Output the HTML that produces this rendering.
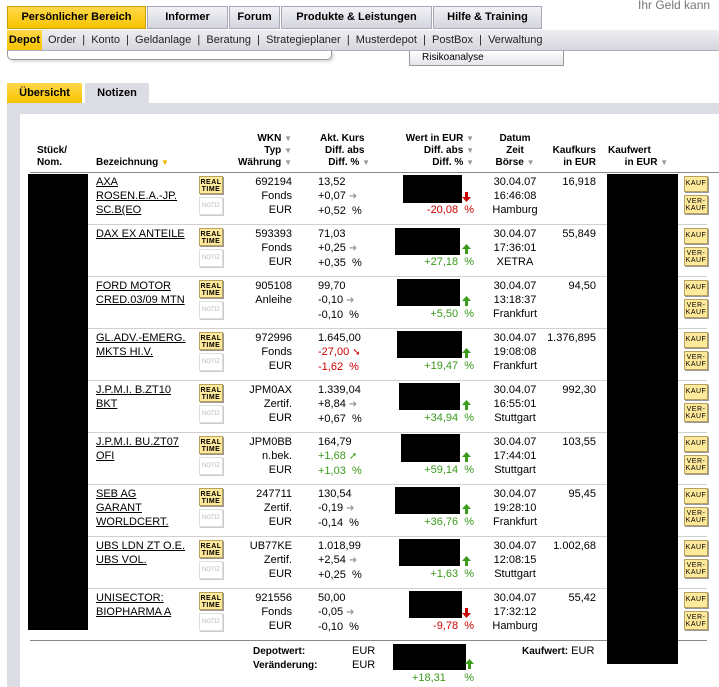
<!DOCTYPE html>
<html><head><meta charset="utf-8"><style>
*{margin:0;padding:0;box-sizing:border-box}
body{width:719px;height:687px;overflow:hidden;background:#fff;font-family:"Liberation Sans","DejaVu Sans",sans-serif;font-size:11px;color:#000;position:relative}
.a{position:absolute;white-space:nowrap}
.tab{position:absolute;top:6px;height:23px;border:1px solid #a8a8b8;background:linear-gradient(#f2f2f6,#d4d4de);font-weight:bold;font-size:11px;text-align:center;line-height:21px}
.y{background:linear-gradient(#ffd84a,#f7c400)!important;border-color:#c8a000!important}
.sub{position:absolute;top:30px;left:7px;width:712px;height:21px;background:linear-gradient(#eeeef2,#d6d6de);border-bottom:1px solid #b0b0bc;font-size:11px;line-height:20px;color:#222}
.h{font-weight:bold;font-size:10px;line-height:12px}
.ar{color:#999;font-size:8px}
.rt{position:absolute;width:24px;height:18px;background:#ffe99a;border:1px solid #b8a060;box-shadow:1px 1px 0 #999;font-size:7px;font-weight:bold;line-height:7px;text-align:center;padding-top:2px;letter-spacing:.5px}
.nt{position:absolute;width:24px;height:18px;background:#fff;border:1px solid #ddd;box-shadow:1px 1px 0 #ccc;font-size:6px;color:#bbb;line-height:16px;text-align:center}
.kb{position:absolute;left:684px;width:24px;background:#ffe99a;border:1px solid #b8a060;box-shadow:1px 1px 0 #999;font-size:7px;text-align:center;line-height:7px;letter-spacing:.5px}
.l{line-height:14px}
.nm{left:96px;text-decoration:underline}
.wk{width:80px;text-align:right;left:212px}
.ku{left:318px}
.dt{width:50px;left:490px;text-align:center}
.kk{width:60px;left:536px;text-align:right}
.b{position:absolute;background:#000}
.sep{position:absolute;left:88px;width:619px;height:1px;background:#d0d0d0}
.red{color:#c00}.grn{color:#3a9a1a}
svg.u,svg.d{position:absolute;width:9px;height:10px}
</style></head><body>
<div class="a" style="left:638px;top:-2px;color:#777;font-size:12px">Ihr Geld kann</div>
<div class="tab y" style="left:7px;width:139px">Persönlicher Bereich</div>
<div class="tab" style="left:147px;width:81px">Informer</div>
<div class="tab" style="left:229px;width:51px">Forum</div>
<div class="tab" style="left:281px;width:151px">Produkte &amp; Leistungen</div>
<div class="tab" style="left:433px;width:109px">Hilfe &amp; Training</div>
<div class="sub"><span class="y" style="display:inline-block;width:35px;font-weight:bold;text-align:center;color:#000">Depot</span><span style="padding-left:6px">Order&nbsp;&nbsp;|&nbsp;&nbsp;Konto&nbsp;&nbsp;|&nbsp;&nbsp;Geldanlage&nbsp;&nbsp;|&nbsp;&nbsp;Beratung&nbsp;&nbsp;|&nbsp;&nbsp;Strategieplaner&nbsp;&nbsp;|&nbsp;&nbsp;Musterdepot&nbsp;&nbsp;|&nbsp;&nbsp;PostBox&nbsp;&nbsp;|&nbsp;&nbsp;Verwaltung</span></div>
<div class="a" style="left:7px;top:50px;width:325px;height:10px;border:1px solid #999;border-top:none;border-radius:0 0 5px 5px;box-shadow:2px 2px 2px #ddd"></div>
<div class="a" style="left:409px;top:51px;width:155px;height:15px;border:1px solid #999;border-top:none;background:linear-gradient(#fff,#e4e4ea);font-size:10px;padding-left:12px;line-height:13px">Risikoanalyse</div>
<div class="a y" style="left:7px;top:83px;width:75px;height:20px;font-weight:bold;text-align:center;line-height:20px">Übersicht</div>
<div class="a" style="left:85px;top:83px;width:64px;height:20px;background:#dcdce4;font-weight:bold;text-align:center;line-height:20px">Notizen</div>
<div class="a" style="left:7px;top:103px;width:712px;height:584px;background:#dcdce4"></div>
<div class="a" style="left:20px;top:114px;width:699px;height:573px;background:#fff"></div>
<div class="a h" style="left:37px;top:145px">Stück/<br>Nom.</div>
<div class="a h" style="left:96px;top:157px">Bezeichnung <span style="color:#f0b400;font-size:8px">▼</span></div>
<div class="a h" style="left:200px;width:92px;text-align:right;top:133px">WKN <span class="ar">▼</span><br>Typ <span class="ar">▼</span><br>Währung <span class="ar">▼</span></div>
<div class="a h" style="left:300px;width:70px;text-align:right;top:133px">Akt. Kurs&nbsp;&nbsp;<br>Diff. abs&nbsp;&nbsp;<br>Diff. % <span class="ar">▼</span></div>
<div class="a h" style="left:390px;width:84px;text-align:right;top:133px">Wert in EUR <span class="ar">▼</span><br>Diff. abs <span class="ar">▼</span><br>Diff. % <span class="ar">▼</span></div>
<div class="a h" style="left:488px;width:54px;text-align:center;top:133px">Datum<br>Zeit<br>Börse <span class="ar">▼</span></div>
<div class="a h" style="left:540px;width:56px;text-align:right;top:145px">Kaufkurs<br>in EUR</div>
<div class="a h" style="left:608px;top:145px">Kaufwert<br>&nbsp;&nbsp;&nbsp;&nbsp;&nbsp;&nbsp;in EUR <span class="ar">▼</span></div>
<div class="a" style="left:30px;top:172px;width:689px;height:1px;background:#888"></div>

<div class="sep" style="top:224px"></div><div class="sep" style="top:276px"></div><div class="sep" style="top:328px"></div><div class="sep" style="top:380px"></div><div class="sep" style="top:432px"></div><div class="sep" style="top:484px"></div><div class="sep" style="top:536px"></div><div class="sep" style="top:588px"></div>
<div class="a" style="left:30px;top:640px;width:677px;height:1px;background:#888"></div>
<div class="b" style="left:28px;top:174px;width:60px;height:456px"></div>
<div class="b" style="left:607px;top:174px;width:71px;height:490px"></div>

<!-- R1 -->
<div class="a l nm" style="top:175px">AXA<br>ROSEN.E.A.-JP.<br>SC.B(EO</div>
<div class="rt" style="left:199px;top:176px">REAL<br>TIME</div><div class="nt" style="left:199px;top:197px">NOTIZ</div>
<div class="a l wk" style="top:175px">692194<br>Fonds<br>EUR</div>
<div class="a l ku" style="top:175px">13,52<br>+0,07 <span class="ar" style="font-size:10px">➜</span><br>+0,52&nbsp; %</div>
<div class="b" style="left:403px;top:175px;width:59px;height:28px"></div>
<svg class="d" style="left:462px;top:192px" viewBox="0 0 9 10"><path d="M3 0h3v5h3L4.5 10 0 5h3z" fill="#c00"/></svg>
<div class="a l red" style="left:400px;width:74px;text-align:right;top:203px">-20,08&nbsp; %</div>
<div class="a l dt" style="top:175px">30.04.07<br>16:46:08<br>Hamburg</div>
<div class="a l kk" style="top:175px">16,918</div>
<div class="kb" style="top:176px;height:16px;line-height:14px">KAUF</div><div class="kb" style="top:195px;height:19px;padding-top:2px">VER-<br>KAUF</div>
<!-- R2 -->
<div class="a l nm" style="top:227px">DAX EX ANTEILE</div>
<div class="rt" style="left:199px;top:228px">REAL<br>TIME</div><div class="nt" style="left:199px;top:249px">NOTIZ</div>
<div class="a l wk" style="top:227px">593393<br>Fonds<br>EUR</div>
<div class="a l ku" style="top:227px">71,03<br>+0,25 <span class="ar" style="font-size:10px">➜</span><br>+0,35&nbsp; %</div>
<div class="b" style="left:395px;top:228px;width:65px;height:27px"></div>
<svg class="u" style="left:462px;top:244px" viewBox="0 0 9 10"><path d="M3 10h3V5h3L4.5 0 0 5h3z" fill="#3a9a1a"/></svg>
<div class="a l grn" style="left:400px;width:74px;text-align:right;top:255px">+27,18&nbsp; %</div>
<div class="a l dt" style="top:227px">30.04.07<br>17:36:01<br>XETRA</div>
<div class="a l kk" style="top:227px">55,849</div>
<div class="kb" style="top:228px;height:16px;line-height:14px">KAUF</div><div class="kb" style="top:247px;height:19px;padding-top:2px">VER-<br>KAUF</div>
<!-- R3 -->
<div class="a l nm" style="top:279px">FORD MOTOR<br>CRED.03/09 MTN</div>
<div class="rt" style="left:199px;top:280px">REAL<br>TIME</div><div class="nt" style="left:199px;top:301px">NOTIZ</div>
<div class="a l wk" style="top:279px">905108<br>Anleihe</div>
<div class="a l ku" style="top:279px">99,70<br>-0,10 <span class="ar" style="font-size:10px">➜</span><br>-0,10&nbsp; %</div>
<div class="b" style="left:397px;top:279px;width:63px;height:27px"></div>
<svg class="u" style="left:462px;top:296px" viewBox="0 0 9 10"><path d="M3 10h3V5h3L4.5 0 0 5h3z" fill="#3a9a1a"/></svg>
<div class="a l grn" style="left:400px;width:74px;text-align:right;top:307px">+5,50&nbsp; %</div>
<div class="a l dt" style="top:279px">30.04.07<br>13:18:37<br>Frankfurt</div>
<div class="a l kk" style="top:279px">94,50</div>
<div class="kb" style="top:280px;height:16px;line-height:14px">KAUF</div><div class="kb" style="top:299px;height:19px;padding-top:2px">VER-<br>KAUF</div>
<!-- R4 -->
<div class="a l nm" style="top:331px">GL.ADV.-EMERG.<br>MKTS HI.V.</div>
<div class="rt" style="left:199px;top:332px">REAL<br>TIME</div><div class="nt" style="left:199px;top:353px">NOTIZ</div>
<div class="a l wk" style="top:331px">972996<br>Fonds<br>EUR</div>
<div class="a l ku" style="top:331px">1.645,00<br><span class="red">-27,00 <span style="font-size:10px">➘</span></span><br><span class="red">-1,62&nbsp; %</span></div>
<div class="b" style="left:397px;top:331px;width:65px;height:27px"></div>
<svg class="u" style="left:462px;top:348px" viewBox="0 0 9 10"><path d="M3 10h3V5h3L4.5 0 0 5h3z" fill="#3a9a1a"/></svg>
<div class="a l grn" style="left:400px;width:74px;text-align:right;top:359px">+19,47&nbsp; %</div>
<div class="a l dt" style="top:331px">30.04.07<br>19:08:08<br>Frankfurt</div>
<div class="a l kk" style="top:331px">1.376,895</div>
<div class="kb" style="top:332px;height:16px;line-height:14px">KAUF</div><div class="kb" style="top:351px;height:19px;padding-top:2px">VER-<br>KAUF</div>
<!-- R5 -->
<div class="a l nm" style="top:383px">J.P.M.I. B.ZT10<br>BKT</div>
<div class="rt" style="left:199px;top:384px">REAL<br>TIME</div><div class="nt" style="left:199px;top:405px">NOTIZ</div>
<div class="a l wk" style="top:383px">JPM0AX<br>Zertif.<br>EUR</div>
<div class="a l ku" style="top:383px">1.339,04<br>+8,84 <span class="ar" style="font-size:10px">➜</span><br>+0,67&nbsp; %</div>
<div class="b" style="left:399px;top:383px;width:61px;height:27px"></div>
<svg class="u" style="left:462px;top:400px" viewBox="0 0 9 10"><path d="M3 10h3V5h3L4.5 0 0 5h3z" fill="#3a9a1a"/></svg>
<div class="a l grn" style="left:400px;width:74px;text-align:right;top:411px">+34,94&nbsp; %</div>
<div class="a l dt" style="top:383px">30.04.07<br>16:55:01<br>Stuttgart</div>
<div class="a l kk" style="top:383px">992,30</div>
<div class="kb" style="top:384px;height:16px;line-height:14px">KAUF</div><div class="kb" style="top:403px;height:19px;padding-top:2px">VER-<br>KAUF</div>
<!-- R6 -->
<div class="a l nm" style="top:435px">J.P.M.I. BU.ZT07<br>OFI</div>
<div class="rt" style="left:199px;top:436px">REAL<br>TIME</div><div class="nt" style="left:199px;top:457px">NOTIZ</div>
<div class="a l wk" style="top:435px">JPM0BB<br>n.bek.<br>EUR</div>
<div class="a l ku grn" style="top:435px"><span style="color:#000">164,79</span><br>+1,68 <span style="font-size:10px">➚</span><br>+1,03&nbsp; %</div>
<div class="b" style="left:401px;top:434px;width:59px;height:28px"></div>
<svg class="u" style="left:462px;top:452px" viewBox="0 0 9 10"><path d="M3 10h3V5h3L4.5 0 0 5h3z" fill="#3a9a1a"/></svg>
<div class="a l grn" style="left:400px;width:74px;text-align:right;top:463px">+59,14&nbsp; %</div>
<div class="a l dt" style="top:435px">30.04.07<br>17:44:01<br>Stuttgart</div>
<div class="a l kk" style="top:435px">103,55</div>
<div class="kb" style="top:436px;height:16px;line-height:14px">KAUF</div><div class="kb" style="top:455px;height:19px;padding-top:2px">VER-<br>KAUF</div>
<!-- R7 -->
<div class="a l nm" style="top:487px">SEB AG<br>GARANT<br>WORLDCERT.</div>
<div class="rt" style="left:199px;top:488px">REAL<br>TIME</div><div class="nt" style="left:199px;top:509px">NOTIZ</div>
<div class="a l wk" style="top:487px">247711<br>Zertif.<br>EUR</div>
<div class="a l ku" style="top:487px">130,54<br>-0,19 <span class="ar" style="font-size:10px">➜</span><br>-0,14&nbsp; %</div>
<div class="b" style="left:395px;top:487px;width:65px;height:27px"></div>
<svg class="u" style="left:462px;top:504px" viewBox="0 0 9 10"><path d="M3 10h3V5h3L4.5 0 0 5h3z" fill="#3a9a1a"/></svg>
<div class="a l grn" style="left:400px;width:74px;text-align:right;top:515px">+36,76&nbsp; %</div>
<div class="a l dt" style="top:487px">30.04.07<br>19:28:10<br>Frankfurt</div>
<div class="a l kk" style="top:487px">95,45</div>
<div class="kb" style="top:488px;height:16px;line-height:14px">KAUF</div><div class="kb" style="top:507px;height:19px;padding-top:2px">VER-<br>KAUF</div>
<!-- R8 -->
<div class="a l nm" style="top:539px">UBS LDN ZT O.E.<br>UBS VOL.</div>
<div class="rt" style="left:199px;top:540px">REAL<br>TIME</div><div class="nt" style="left:199px;top:561px">NOTIZ</div>
<div class="a l wk" style="top:539px">UB77KE<br>Zertif.<br>EUR</div>
<div class="a l ku" style="top:539px">1.018,99<br>+2,54 <span class="ar" style="font-size:10px">➜</span><br>+0,25&nbsp; %</div>
<div class="b" style="left:399px;top:539px;width:61px;height:27px"></div>
<svg class="u" style="left:462px;top:556px" viewBox="0 0 9 10"><path d="M3 10h3V5h3L4.5 0 0 5h3z" fill="#3a9a1a"/></svg>
<div class="a l grn" style="left:400px;width:74px;text-align:right;top:567px">+1,63&nbsp; %</div>
<div class="a l dt" style="top:539px">30.04.07<br>12:08:15<br>Stuttgart</div>
<div class="a l kk" style="top:539px">1.002,68</div>
<div class="kb" style="top:540px;height:16px;line-height:14px">KAUF</div><div class="kb" style="top:559px;height:19px;padding-top:2px">VER-<br>KAUF</div>
<!-- R9 -->
<div class="a l nm" style="top:591px">UNISECTOR:<br>BIOPHARMA A</div>
<div class="rt" style="left:199px;top:592px">REAL<br>TIME</div><div class="nt" style="left:199px;top:613px">NOTIZ</div>
<div class="a l wk" style="top:591px">921556<br>Fonds<br>EUR</div>
<div class="a l ku" style="top:591px">50,00<br>-0,05 <span class="ar" style="font-size:10px">➜</span><br>-0,10&nbsp; %</div>
<div class="b" style="left:409px;top:591px;width:53px;height:27px"></div>
<svg class="d" style="left:462px;top:608px" viewBox="0 0 9 10"><path d="M3 0h3v5h3L4.5 10 0 5h3z" fill="#c00"/></svg>
<div class="a l red" style="left:400px;width:74px;text-align:right;top:619px">-9,78&nbsp; %</div>
<div class="a l dt" style="top:591px">30.04.07<br>17:32:12<br>Hamburg</div>
<div class="a l kk" style="top:591px">55,42</div>
<div class="kb" style="top:592px;height:16px;line-height:14px">KAUF</div><div class="kb" style="top:611px;height:19px;padding-top:2px">VER-<br>KAUF</div>
<!-- totals -->
<div class="a h" style="left:253px;top:645px;line-height:14px">Depotwert:<br>Veränderung:</div>
<div class="a l" style="left:352px;top:644px">EUR<br>EUR</div>
<div class="b" style="left:393px;top:644px;width:73px;height:26px"></div>
<svg class="u" style="left:465px;top:659px" viewBox="0 0 9 10"><path d="M3 10h3V5h3L4.5 0 0 5h3z" fill="#3a9a1a"/></svg>
<div class="a l grn" style="left:400px;width:74px;text-align:right;top:671px">+18,31&nbsp;&nbsp;&nbsp;&nbsp;&nbsp; %</div>
<div class="a" style="left:522px;top:645px"><b style="font-size:10px">Kaufwert:</b> EUR</div>
</body></html>
